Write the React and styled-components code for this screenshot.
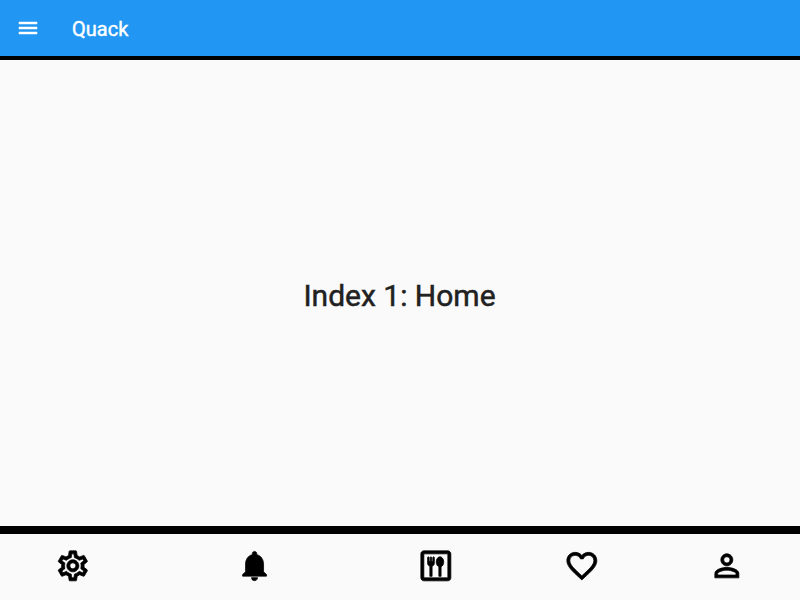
import React from 'react';
import styled, { createGlobalStyle } from 'styled-components';
import {
  MdMenu,
  MdOutlineSettings,
  MdNotifications,
  MdOutlineDining,
  MdFavoriteBorder,
  MdPersonOutline,
} from 'react-icons/md';

const GlobalStyle = createGlobalStyle`
  * { box-sizing: border-box; }
  body { margin: 0; font-family: Roboto, sans-serif; background: #fafafa; }
`;

const Screen = styled.div`
  display: flex;
  flex-direction: column;
  width: 100%;
  height: 100vh;
  overflow: hidden;
  background: #fafafa;
`;

const AppBar = styled.header`
  display: flex;
  align-items: center;
  flex: none;
  height: 60px;
  padding-left: 16px;
  background: #2196f3;
  border-bottom: 4px solid #000;
  color: #fff;
`;

const IconButton = styled.button`
  display: flex;
  padding: 0;
  border: 0;
  background: none;
  color: inherit;

  svg { stroke-width: 0.5px; }
  svg [fill='none'] { stroke: none; }
`;

const Title = styled.h1`
  margin: 2px 0 0 32px;
  font-size: 20px;
  font-weight: 400;
  line-height: 24px;
  -webkit-text-stroke: 0.4px currentColor;
`;

const Content = styled.main`
  flex: 1;
  display: flex;
  align-items: center;
  justify-content: center;
  padding: 6px 1px 0 0;
  color: #212121;
  font-size: 30px;
  font-weight: 400;
  line-height: 36px;
  -webkit-text-stroke: 0.5px currentColor;
`;

const BottomNav = styled.nav`
  display: flex;
  flex: none;
  height: 74px;
  padding-bottom: 2px;
  border-top: 8px solid #000;
`;

const NavItem = styled.button`
  flex: ${({ $selected }) => ($selected ? 1.5 : 1)} 1 0;
  display: flex;
  align-items: center;
  justify-content: center;
  padding: 0;
  border: 0;
  background: none;
  color: #000;

  svg { stroke-width: 0.5px; }
  svg [fill='none'] { stroke: none; }
  svg path { transform: translate(${({ $selected }) => ($selected ? '-0.3px, -0.25px' : '-0.1px, -0.1px')}); }
`;

const items = [
  { label: 'Settings', Icon: MdOutlineSettings },
  { label: 'Notifications', Icon: MdNotifications },
  { label: 'Dining', Icon: MdOutlineDining },
  { label: 'Favorites', Icon: MdFavoriteBorder },
  { label: 'Profile', Icon: MdPersonOutline },
];

export default function App() {
  return (
    <Screen>
      <GlobalStyle />
      <AppBar>
        <IconButton aria-label="Menu">
          <MdMenu size={24} />
        </IconButton>
        <Title>Quack</Title>
      </AppBar>
      <Content>Index 1: Home</Content>
      <BottomNav>
        {items.map(({ label, Icon }, index) => (
          <NavItem key={label} aria-label={label} $selected={index === 1}>
            <Icon size={36} />
          </NavItem>
        ))}
      </BottomNav>
    </Screen>
  );
}
